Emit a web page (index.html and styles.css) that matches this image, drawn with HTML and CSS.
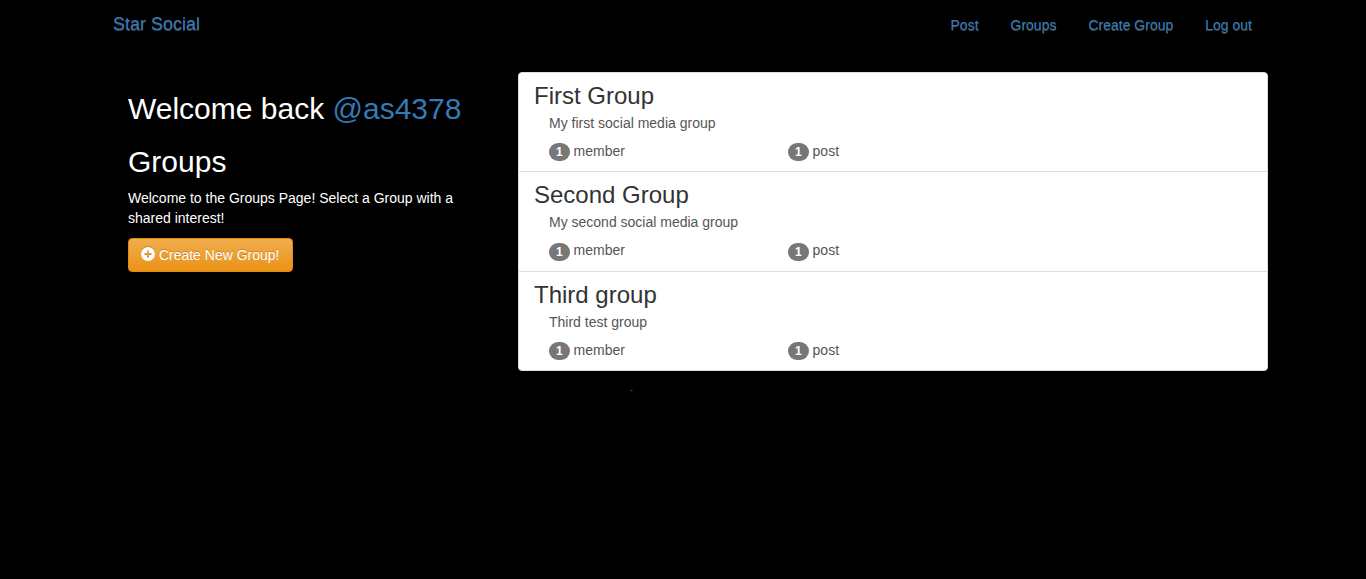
FILE: index.html
```html
<!DOCTYPE html>
<html lang="en">
<head>
<meta charset="utf-8">
<title>Star Social</title>
<link rel="stylesheet" href="styles.css">
</head>
<body>
<nav class="navbar">
  <a class="brand" href="#">Star Social</a>
  <ul class="nav">
    <li><a href="#">Post</a></li>
    <li><a href="#">Groups</a></li>
    <li><a href="#">Create Group</a></li>
    <li><a href="#">Log out</a></li>
  </ul>
</nav>
<main class="container">
  <section class="intro">
    <h2>Welcome back <a href="#">@as4378</a></h2>
    <h2>Groups</h2>
    <p>Welcome to the Groups Page! Select a Group with a shared interest!</p>
    <a class="btn" href="#"><svg class="plus" viewBox="0 0 14 14"><path fill="#fff" fill-rule="evenodd" d="M7 0a7 7 0 1 1 0 14A7 7 0 0 1 7 0ZM6 3.6v2.4H3.6v2H6v2.4h2V8h2.4V6H8V3.6Z"/></svg> Create New Group!</a>
  </section>
  <section class="list-group">
    <a class="item" href="#">
      <h3>First Group</h3>
      <p class="desc">My first social media group</p>
      <div class="counts"><span><b class="badge">1</b> member</span><span><b class="badge">1</b> post</span></div>
    </a>
    <a class="item" href="#">
      <h3>Second Group</h3>
      <p class="desc">My second social media group</p>
      <div class="counts"><span><b class="badge">1</b> member</span><span><b class="badge">1</b> post</span></div>
    </a>
    <a class="item" href="#">
      <h3>Third group</h3>
      <p class="desc">Third test group</p>
      <div class="counts"><span><b class="badge">1</b> member</span><span><b class="badge">1</b> post</span></div>
    </a>
  </section>
</main>
<i class="speck"></i>
</body>
</html>
```
FILE: styles.css
```css
* { box-sizing: border-box; }
body {
  margin: 0;
  background: #000;
  color: #fff;
  font: 14px/20px "Liberation Sans", Arial, sans-serif;
}
a { color: #337ab7; text-decoration: none; }
.navbar {
  display: flex;
  justify-content: space-between;
  width: 1170px;
  height: 72px;
  margin: 0 auto;
  padding: 0 0 0 15px;
}
.brand { padding-top: 14px; font-size: 18px; }
.nav {
  display: flex;
  gap: 32px;
  margin: 0;
  padding: 15px 16px 0 0;
  list-style: none;
}
.brand, .nav { text-shadow: 0 1px 0 rgba(255, 255, 255, .25); }
.container {
  display: flex;
  align-items: flex-start;
  width: 1170px;
  margin: 0 auto;
  padding: 0 0 0 30px;
}
.intro { width: 390px; padding-right: 30px; }
h2 {
  margin: 20px 0 10px;
  font-size: 30px;
  line-height: 33px;
}
h2, h3 { font-weight: 400; }
.intro p { margin: 0 0 10px; }
.btn {
  display: inline-block;
  height: 34px;
  padding: 6px 12px;
  border: 1px solid #e38d13;
  border-radius: 4px;
  background: linear-gradient(#f0ad4e, #eb9316);
  color: #fff;
  text-shadow: 0 -1px 0 rgba(0, 0, 0, .2);
}
.plus {
  width: 14px;
  height: 14px;
  vertical-align: -1px;
  filter: drop-shadow(0 -1px 0 rgba(0, 0, 0, .2));
}
.list-group {
  width: 750px;
  border: 1px solid #ddd;
  border-radius: 4px;
  background: #fff;
}
.item {
  display: block;
  padding: 10px 15px 10.4px;
  color: #555;
}
.item + .item { border-top: 1px solid #ddd; }
h3 {
  margin: 0 0 3.6px;
  color: #333;
  font-size: 24px;
  line-height: 26.4px;
}
.desc { margin: 0 15px 8px; }
.counts {
  display: grid;
  grid-template-columns: 239px 239px;
  height: 20px;
  padding-left: 15px;
}
.badge {
  display: inline-block;
  min-width: 10px;
  padding: 3px 7px;
  border-radius: 10px;
  background: #777;
  color: #fff;
  font-size: 12px;
  line-height: 12px;
  text-align: center;
  vertical-align: -0.3px;
}
.speck {
  position: absolute;
  left: 630px;
  top: 390px;
  width: 3px;
  height: 1px;
  background: linear-gradient(90deg, #700 33%, #f00 33% 66%, #700 66%);
}
```
